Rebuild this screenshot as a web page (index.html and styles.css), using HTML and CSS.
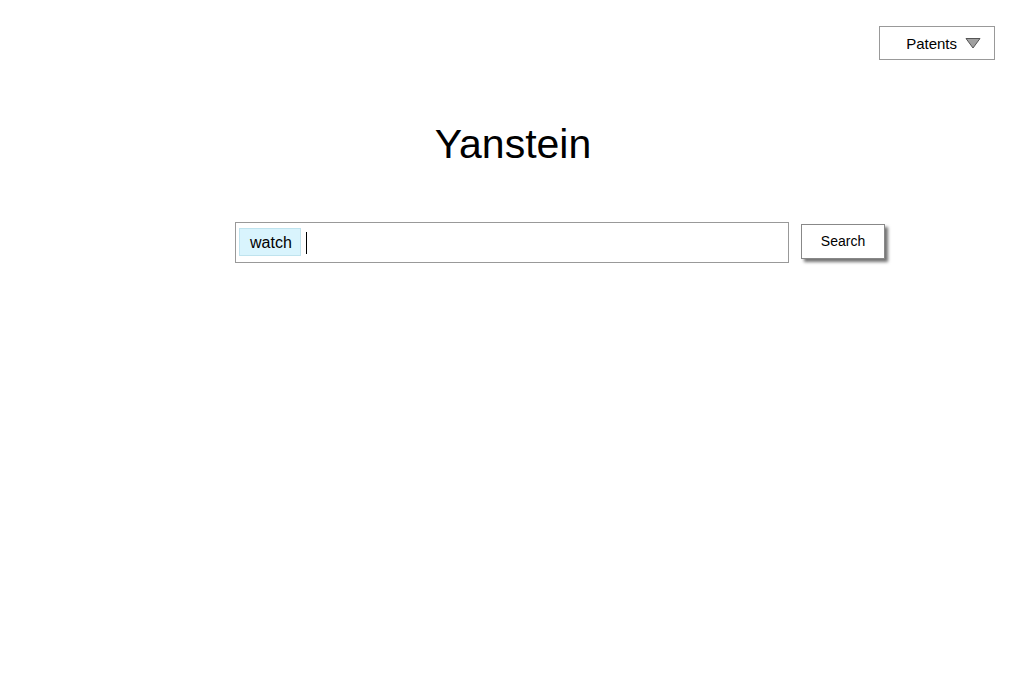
FILE: index.html
```html
<!DOCTYPE html>
<html>
<head>
<meta charset="utf-8">
<link rel="stylesheet" href="styles.css">
</head>
<body>
<div class="page">
  <header class="topbar">
    <div class="dropdown">
      <span class="dropdown-label">Patents</span>
      <svg class="dropdown-arrow" width="16" height="12" viewBox="0 0 16 12"><polygon points="1,1.5 15,1.5 8,11" fill="#a0a0a0" stroke="#555" stroke-width="1"/></svg>
    </div>
  </header>
  <h1 class="logo">Yanstein</h1>
  <div class="search-row">
    <div class="search-box">
      <span class="chip">watch</span>
      <span class="caret"></span>
    </div>
    <button class="search-btn">Search</button>
  </div>
</div>
</body>
</html>
```
FILE: styles.css
```css
html, body {
  margin: 0;
  padding: 0;
  background: #fff;
}
body {
  font-family: "Liberation Sans", Arial, sans-serif;
  color: #000;
}
.page {
  width: 1024px;
  height: 700px;
}
.topbar {
  display: flex;
  justify-content: flex-end;
  padding: 26px 29px 0 0;
}
.dropdown {
  box-sizing: border-box;
  width: 116px;
  height: 34px;
  border: 1px solid #999;
  display: flex;
  align-items: center;
  justify-content: flex-end;
  padding-right: 13px;
  gap: 8px;
}
.dropdown-label {
  font-size: 15px;
  padding-top: 1px;
}
.dropdown-arrow {
  display: block;
}
.logo {
  margin: 60px 0 0 0;
  text-align: center;
  font-weight: normal;
  font-size: 41px;
  line-height: 48px;
  padding-left: 2px;
}
.search-row {
  display: flex;
  align-items: flex-start;
  margin-top: 54px;
  padding-left: 235px;
  gap: 12px;
}
.search-box {
  box-sizing: border-box;
  width: 554px;
  height: 41px;
  border: 1px solid #999;
  display: flex;
  align-items: center;
  padding-left: 3px;
  gap: 5px;
}
.chip {
  box-sizing: border-box;
  height: 28px;
  padding: 0 8px 0 10px;
  background: #d9f4fd;
  border: 1px solid #bfe3ee;
  font-size: 16px;
  line-height: 27px;
  margin-top: -1px;
}
.caret {
  width: 1px;
  height: 22px;
  background: #000;
  margin-top: 1px;
}
.search-btn {
  box-sizing: border-box;
  margin-top: 2px;
  width: 84px;
  height: 35px;
  background: #fff;
  border: 1px solid #888;
  box-shadow: 3px 3px 3px rgba(0,0,0,0.55);
  font-family: "Liberation Sans", Arial, sans-serif;
  font-size: 14px;
  color: #000;
  padding: 0;
  padding-bottom: 2px;
}
```
